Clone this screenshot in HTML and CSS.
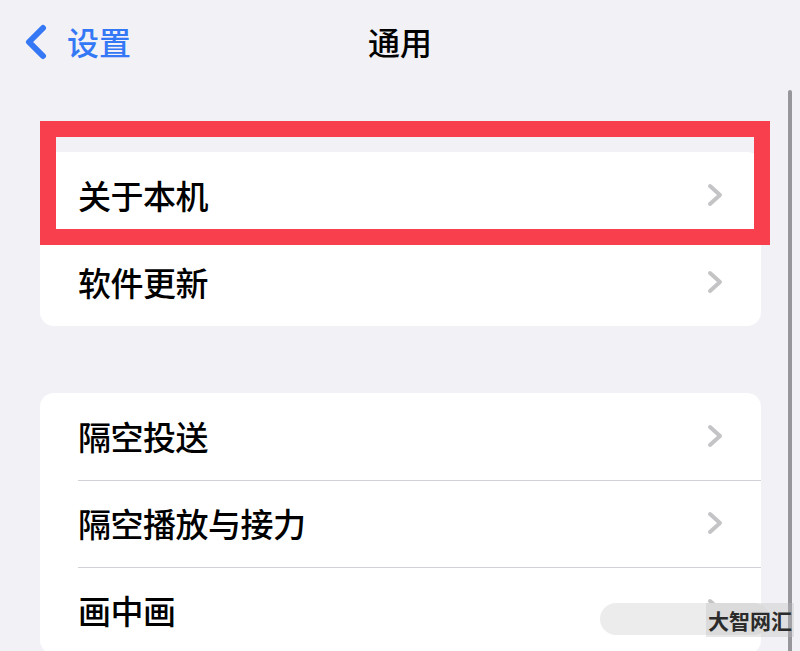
FILE: index.html
```html
<!DOCTYPE html>
<html lang="zh-CN">
<head>
<meta charset="UTF-8">
<meta name="viewport" content="width=800, initial-scale=1.0">
<title>通用</title>
<link rel="stylesheet" href="styles.css">
</head>
<body>
<div class="screen">
    <div class="nav">
        <a class="back">
            <svg width="24" height="36" viewBox="0 0 24 36"><path d="M19 4 L5 18 L19 32" fill="none" stroke="#3478f6" stroke-width="6" stroke-linecap="round" stroke-linejoin="round"/></svg>
            <span>设置</span>
        </a>
        <div class="title">通用</div>
        <div></div>
    </div>

    <div class="group first">
        <div class="item"><span>关于本机</span><i class="chev"></i></div>
        <div class="item"><span>软件更新</span><i class="chev"></i></div>
    </div>

    <div class="group">
        <div class="item"><span>隔空投送</span><i class="chev"></i></div>
        <div class="item"><span>隔空播放与接力</span><i class="chev"></i></div>
        <div class="item"><span>画中画</span><i class="chev"></i></div>
    </div>

    <!-- 标注框 / 滚动条 / 水印 -->
    <div class="mark"></div>
    <div class="scrollbar"></div>
    <div class="pill"></div>
    <div class="brand">大智网汇</div>
</div>
</body>
</html>
```

FILE: styles.css
```css
*{
    box-sizing: border-box;
}
body{
    margin: 0;
    background: #f2f1f6;
    font-family: "Noto Sans CJK SC", "Noto Sans", sans-serif;
    color: #000;
}
.screen{
    position: relative;
    width: 800px;
    height: 651px;
    overflow: hidden;
}
.nav{
    display: grid;
    grid-template-columns: 1fr auto 1fr;
    align-items: center;
    height: 86px;
    padding: 0 0 4px 24px;
}
.back{
    display: flex;
    align-items: center;
    gap: 19px;
    color: #3478f6;
    font-size: 32px;
    font-weight: 500;
}
.back svg{
    display: block;
    margin-top: 2px;
}
.title{
    font-size: 32px;
    font-weight: 500;
    margin-left: -24px;
}
.group{
    background: #fff;
    border-radius: 14px;
    margin: 0 39px 0 40px;
}
.group.first{
    margin-top: 66px;
    margin-bottom: 67px;
}
.item{
    display: flex;
    align-items: center;
    justify-content: space-between;
    height: 87px;
    margin-left: 38px;
    padding: 0 38px 2px 0;
    font-size: 33px;
    font-weight: 500;
    letter-spacing: -0.5px;
}
.item + .item{
    border-top: 1px solid #d2d2d6;
}
.chev{
    width: 16px;
    height: 24px;
    background: url("data:image/svg+xml;utf8,<svg xmlns='http://www.w3.org/2000/svg' width='16' height='24' viewBox='0 0 16 24'><path d='M3 3 L13 12 L3 21' fill='none' stroke='%23c4c4c7' stroke-width='4' stroke-linecap='round' stroke-linejoin='round'/></svg>") no-repeat;
}
.mark{
    position: absolute;
    left: 40px;
    top: 121px;
    width: 730px;
    height: 124px;
    border: 16px solid #f73f4d;
}
.scrollbar{
    position: absolute;
    left: 788px;
    top: 90px;
    width: 4px;
    height: 600px;
    border-radius: 2px;
    background: #96969b;
}
.pill{
    position: absolute;
    left: 600px;
    top: 603px;
    width: 170px;
    height: 32px;
    border-radius: 16px;
    background: #ececec;
}
.brand{
    position: absolute;
    left: 706px;
    top: 603px;
    height: 34px;
    line-height: 34px;
    padding: 0 2px;
    font-size: 21px;
    font-weight: 700;
    color: #2b2b2b;
    background: rgba(190, 190, 190, 0.35);
}
```
